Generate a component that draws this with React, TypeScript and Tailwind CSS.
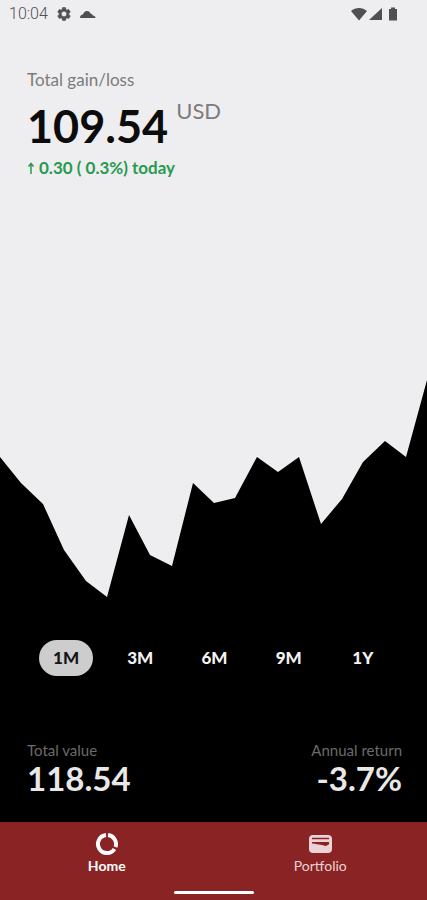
import { useState } from "react";

const points: [number, number][] = [
  [0, 77], [21, 103], [43, 124], [64, 170], [86, 201], [107, 217], [129, 135],
  [150, 175], [172, 186], [193, 103], [214, 123], [235, 118], [257, 77],
  [278, 92], [299, 77], [321, 144], [342, 119], [363, 82], [385, 61],
  [406, 77], [427, 0],
];

const ranges = ["1M", "3M", "6M", "9M", "1Y"];

function StatusBar() {
  return (
    <div className="flex h-7 items-center justify-between pl-[9px] pr-7 text-[#505052]">
      <div className="flex items-center gap-2">
        <span className="font-['Roboto',sans-serif] text-base font-light">10:04</span>
        <svg className="size-4" viewBox="0 0 24 24" fill="currentColor" stroke="currentColor" aria-hidden="true">
          <path d="M19.14 12.94c.04-.3.06-.61.06-.94s-.02-.64-.07-.94l2.03-1.58a.49.49 0 0 0 .12-.61l-1.92-3.32a.49.49 0 0 0-.59-.22l-2.39.96a7 7 0 0 0-1.62-.94l-.36-2.54a.48.48 0 0 0-.48-.41h-3.84a.48.48 0 0 0-.47.41l-.36 2.54a7.4 7.4 0 0 0-1.62.94l-2.39-.96a.48.48 0 0 0-.59.22L2.74 8.87a.48.48 0 0 0 .12.61l2.03 1.58a6 6 0 0 0 0 1.88l-2.03 1.58a.49.49 0 0 0-.12.61l1.92 3.32c.12.22.37.29.59.22l2.39-.96c.5.38 1.03.7 1.62.94l.36 2.54c.05.24.24.41.48.41h3.84c.24 0 .44-.17.47-.41l.36-2.54a7 7 0 0 0 1.62-.94l2.39.96c.22.08.47 0 .59-.22l1.92-3.32a.48.48 0 0 0-.12-.61zM12 16.2a4.2 4.2 0 1 1 0-8.400 4.200 4.200 0 0 1 0 8.400z" />
        </svg>
        <svg className="h-4 w-4" viewBox="0 0 16 16" fill="currentColor" aria-hidden="true">
          <path d="M0 12c0-2 1.200-3.200 3-3.400C3.700 6.200 5 5 7 5c1.900 0 3.200 1.100 3.700 2.800 1.100.1 1.900.7 2.100 1.600 1.700.2 2.700 1.100 2.700 2.600z" />
        </svg>
      </div>
      <svg className="h-4 w-12" viewBox="0 0 48 16" fill="currentColor" aria-hidden="true">
        <path d="M0 5c4.500-4 11.500-4 16 0L8 14.500zM31 2v12H18zM38 3h2V1.500h4V3h2v11.500h-8z" />
      </svg>
    </div>
  );
}

export default function App() {
  const [range, setRange] = useState("1M");
  const [tab, setTab] = useState("Home");
  const area = points.map(([x, y]) => `${x},${y}`).join(" ");

  return (
    <div className="flex min-h-screen flex-col bg-[#eeeef0] font-['Lato',sans-serif]">
      <StatusBar />
      <header className="px-[27px] pt-10">
        <h1 className="text-[17px] leading-6 text-[#7b7b7d]">Total gain/loss</h1>
        <p className="flex items-start gap-2 pt-1">
          <span className="text-[45px] leading-[60px] font-bold text-[#0c0c0c]">109.54</span>
          <span className="text-[22px] leading-[30px] text-[#7b7b7d]">USD</span>
        </p>
        <p className="flex items-center gap-1 text-[17px] leading-6 font-bold text-[#289a50]">
          <svg className="h-3 w-2" viewBox="0 0 8 12" fill="none" stroke="currentColor" strokeWidth="1.500" role="img" aria-label="Up">
            <path d="M4 12V2M1.500 4.500L4 1.500l2.500 3" />
          </svg>
          0.30 ( 0.3%) today
        </p>
      </header>

      <main className="mt-auto">
        <svg
          className="block h-[220px] w-full"
          viewBox="0 0 427 220"
          preserveAspectRatio="none"
          role="img"
          aria-label="Gain and loss over time"
        >
          <polygon points={`${area} 427,220 0,220`} fill="#000" />
        </svg>
        <div className="bg-black pt-10 pr-[25px] pb-[27px] pl-[27px]">
          <div className="flex justify-around px-0.5">
            {ranges.map((r) => (
              <button
                key={r}
                type="button"
                aria-pressed={range === r}
                onClick={() => setRange(r)}
                className={`h-9 w-[54px] rounded-full text-[17px] font-black ${
                  range === r ? "bg-[#cdcdcd] text-[#161616]" : "text-[#f2f2f2]"
                }`}
              >
                {r}
              </button>
            ))}
          </div>
          <div className="flex justify-between pt-[62px]">
            <div>
              <h2 className="text-[15px] leading-6 text-[#6b6b6b]">Total value</h2>
              <p className="text-[33px] leading-[33px] font-bold text-[#e8e8e8]">118.54</p>
            </div>
            <div className="text-right">
              <h2 className="text-[15px] leading-6 text-[#6b6b6b]">Annual return</h2>
              <p className="text-[33px] leading-[33px] font-bold text-[#e8e8e8]">-3.7%</p>
            </div>
          </div>
        </div>
      </main>

      <footer className="bg-[#8a2424] pb-1.5">
        <nav className="grid h-[69px] grid-cols-2">
          <button
            type="button"
            aria-current={tab === "Home" ? "page" : undefined}
            onClick={() => setTab("Home")}
            className="flex flex-col items-center pt-2.5 text-sm leading-5 font-bold text-white"
          >
            <svg className="size-6" viewBox="0 0 24 24" fill="none" stroke="currentColor" strokeWidth="4" aria-hidden="true">
              <path d="M13 3.100A9 9 0 0 1 20.500 15M19.500 17A9 9 0 1 1 11 3.100" />
            </svg>
            Home
          </button>
          <button
            type="button"
            aria-current={tab === "Portfolio" ? "page" : undefined}
            onClick={() => setTab("Portfolio")}
            className="flex flex-col items-center pt-2.5 text-sm leading-5 text-[#ecd2d4]"
          >
            <svg className="size-6" viewBox="0 0 24 24" aria-hidden="true">
              <rect x="1" y="3" width="23" height="18" rx="4" fill="currentColor" />
              <path d="M4 6.500h17" stroke="#8a2424" strokeWidth="1.500" />
              <path d="M4 10h17v2.500c-1.500 0-2 1.500-3.500 1.500-3-1-6-1.500-13.500-2.500z" fill="#8a2424" />
            </svg>
            Portfolio
          </button>
        </nav>
        <div className="mx-auto h-[3px] w-20 rounded-full bg-white" />
      </footer>
    </div>
  );
}
